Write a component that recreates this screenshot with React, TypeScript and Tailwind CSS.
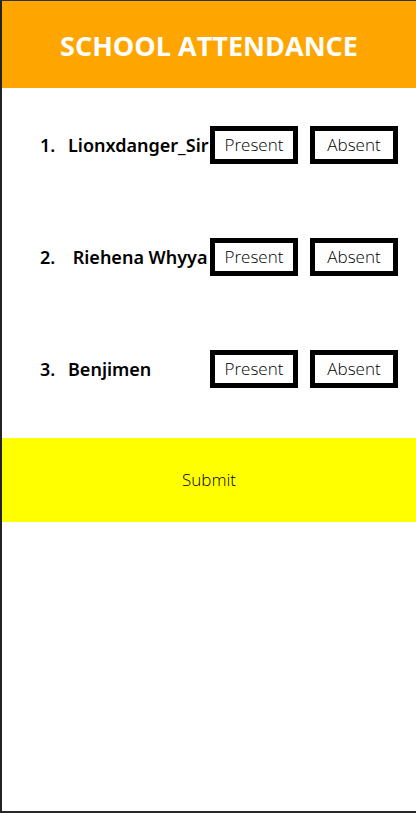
const students: string[] = ['Lionxdanger_Sir', ' Riehena Whyya', 'Benjimen'];

const markClass =
  'h-[38px] w-[88px] shrink-0 border-[5px] border-black bg-white text-center text-[17px] leading-7 font-light text-black';

function StudentRow({ position, name }: { position: number; name: string }) {
  return (
    <li className="flex h-[38px] items-center font-['Noto_Sans','Open_Sans',sans-serif]">
      <span className="w-7 shrink-0 text-lg font-semibold">{position}.</span>
      <span className="min-w-0 flex-1 text-lg font-semibold whitespace-pre">{name}</span>
      <div className="flex shrink-0 gap-3 font-['Open_Sans','Noto_Sans',sans-serif]">
        <button type="button" aria-label={`Present: ${name.trim()}`} className={markClass}>
          Present
        </button>
        <button type="button" aria-label={`Absent: ${name.trim()}`} className={markClass}>
          Absent
        </button>
      </div>
    </li>
  );
}

export default function App() {
  return (
    <main className="min-h-screen border-t border-b-2 border-l-2 border-t-[#333] border-b-[#2b292a] border-l-[#222326] bg-white font-['Open_Sans','Noto_Sans',sans-serif] text-black">
      <header className="flex h-[87px] items-center justify-center bg-[#ffa500]">
        <h1 className="pt-0.5 text-[27px] leading-9 font-bold text-white">SCHOOL ATTENDANCE</h1>
      </header>
      <ol className="flex flex-col gap-[74px] pt-[38px] pr-[18px] pb-[50px] pl-[38px]">
        {students.map((name, index) => (
          <StudentRow key={name} position={index + 1} name={name} />
        ))}
      </ol>
      <button type="button" className="h-[84px] w-full bg-[#ffff00] text-[17px] font-light text-black">
        Submit
      </button>
    </main>
  );
}
